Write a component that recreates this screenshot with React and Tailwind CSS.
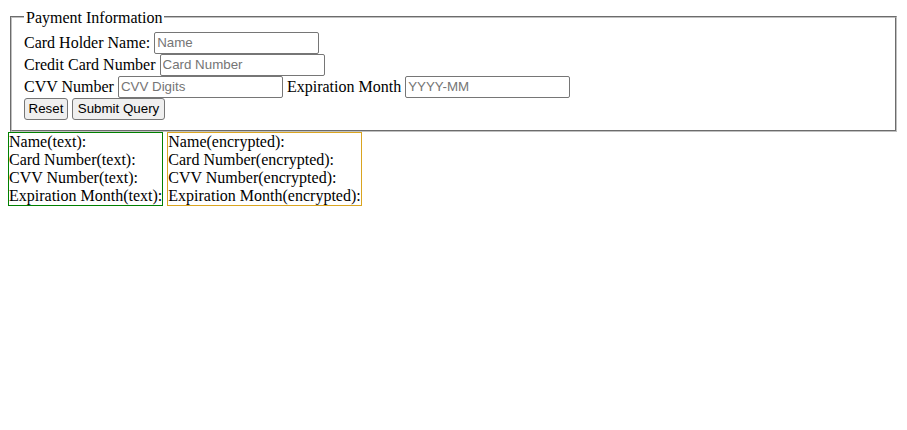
import React from 'react';

const inputCls =
  'w-[165px] h-[22px] border border-[#767676] rounded-[2px] px-[2px] py-[1px] bg-white text-[13.333px] leading-[normal] font-["Liberation_Sans",Arial,sans-serif] placeholder:text-[#757575] outline-none';

const btnCls =
  'h-[22px] border border-[#767676] rounded-[3px] bg-[#efefef] px-0 py-[1px] text-[13.333px] leading-[normal] text-black text-center font-["Liberation_Sans",Arial,sans-serif]';

const App = () => {
  return (
    <div className='m-2 font-["Liberation_Serif","Times_New_Roman",serif] text-base leading-[normal] text-black'>
      <form>
        <fieldset className="mx-[2px] border-2 [border-style:groove] border-[#c0c0c0] px-3 pt-[5.6px] pb-[10px]">
          <legend className="px-[2px]">
            <span className="relative top-px">Payment Information</span>
          </legend>
          <div className="flex items-baseline gap-1">
            <label className="relative top-px">Card Holder Name:</label>
            <input type="text" placeholder="Name" className={inputCls} />
          </div>
          <div className="flex items-baseline gap-1">
            <label className="relative top-px">Credit Card Number</label>
            <input type="text" placeholder="Card Number" className={inputCls} />
          </div>
          <div className="flex items-baseline gap-1">
            <label className="relative top-px">CVV Number</label>
            <input type="text" placeholder="CVV Digits" className={inputCls} />
            <label className="relative top-px">Expiration Month</label>
            <input type="text" placeholder="YYYY-MM" className={inputCls} />
          </div>
          <div className="flex items-baseline gap-1">
            <button type="reset" className={`${btnCls} w-[44px]`}>Reset</button>
            <button type="button" className={`${btnCls} w-[93px]`}>Submit Query</button>
          </div>
        </fieldset>
      </form>
      <div className="flex items-start gap-1">
        <div className="border border-[#008000]">
          <div>Name(text):</div>
          <div>Card Number(text):</div>
          <div>CVV Number(text):</div>
          <div>Expiration Month(text):</div>
        </div>
        <div className="border border-[#daa520]">
          <div>Name(encrypted):</div>
          <div>Card Number(encrypted):</div>
          <div>CVV Number(encrypted):</div>
          <div>Expiration Month(encrypted):</div>
        </div>
      </div>
    </div>
  );
};

export default App;
